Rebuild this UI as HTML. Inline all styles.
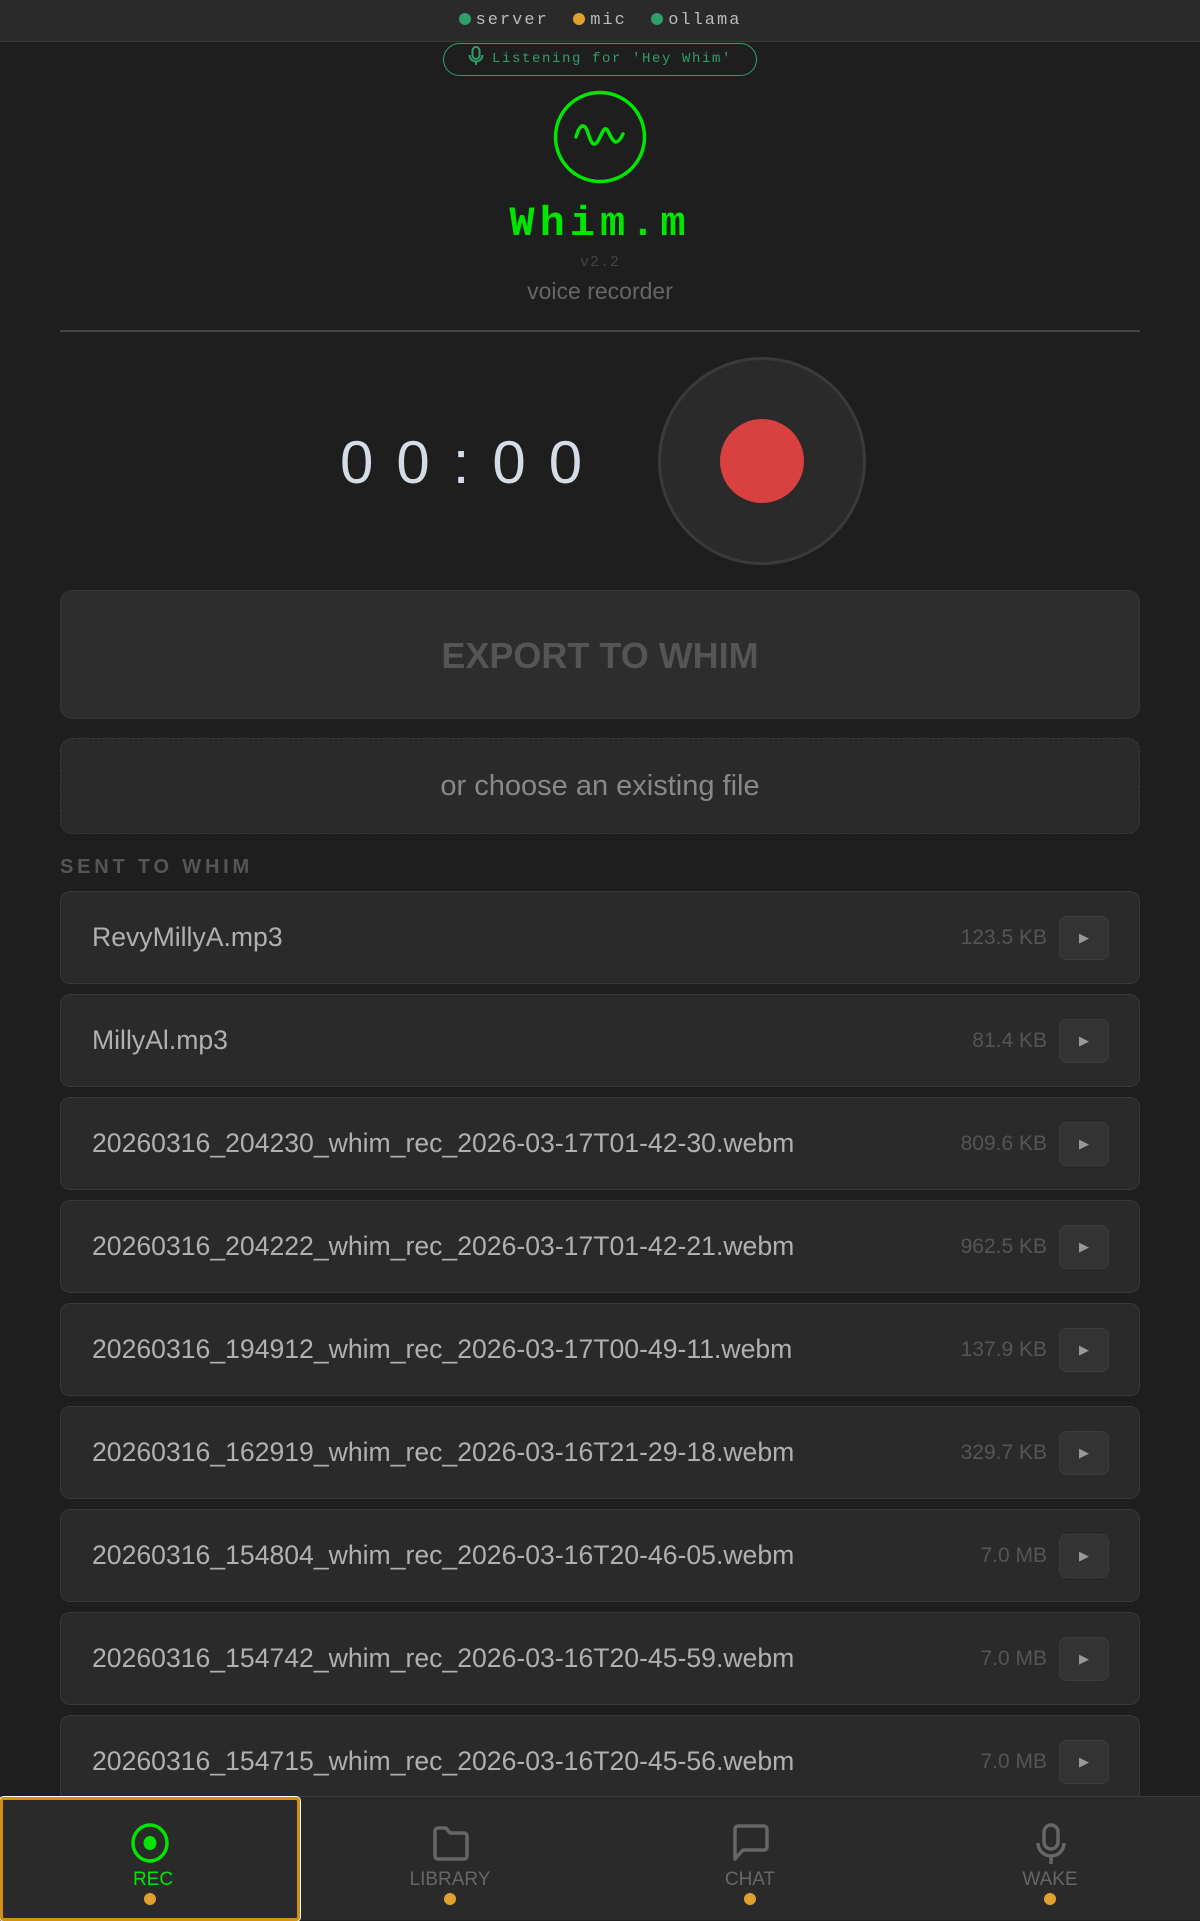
<!DOCTYPE html>
<html><head><meta charset="utf-8"><style>
*{box-sizing:border-box;margin:0;padding:0}
body{width:1200px;height:1920px;background:#1e1e1e;font-family:"Liberation Sans",sans-serif;position:relative;overflow:hidden;color:#aaa}
.top{position:absolute;left:0;top:0;width:1200px;height:42px;background:#2a2a2a;border-bottom:1px solid #3a3a3a;text-align:center;font-family:"Liberation Mono",monospace;font-size:17px;color:#bbb;line-height:42px;letter-spacing:2px}
.top .d{display:inline-block;width:12px;height:12px;border-radius:50%;vertical-align:-1px;margin-right:5px}
.pill{position:absolute;left:443px;top:43px;width:314px;height:33px;border:1.5px solid #2e9e6a;border-radius:17px;font-family:"Liberation Mono",monospace;font-size:14px;color:#2e9e6a;line-height:30px;text-align:center;letter-spacing:1.6px}
.abs{position:absolute}
.title{left:0;width:1200px;top:200px;text-align:center;font-family:"Liberation Mono",monospace;font-weight:bold;font-size:42px;color:#00e600;letter-spacing:5px}
.ver{left:0;width:1200px;top:254px;text-align:center;font-family:"Liberation Mono",monospace;font-size:15px;color:#444;letter-spacing:1px}
.sub{left:0;width:1200px;top:278px;text-align:center;font-size:23px;color:#666}
.hr{left:60px;top:330px;width:1080px;height:2px;background:#444}
.timer{left:340px;top:428px;font-size:60px;color:#d6dce6;letter-spacing:23px;font-weight:300}
.rec{left:658px;top:357px;width:208px;height:208px;border-radius:50%;background:#2a2a2a;border:3px solid #3a3a3a}
.rec i{position:absolute;left:59px;top:59px;width:84px;height:84px;border-radius:50%;background:#d94141}
.btn{left:60px;width:1080px;background:#2d2d2d;border-radius:12px;text-align:center}
.lbl{left:60px;top:856px;font-size:20px;font-weight:bold;color:#555;letter-spacing:3.8px}
.row{position:absolute;left:60px;width:1080px;height:93px;background:#2a2a2a;border:1px solid #383838;border-radius:10px}
.row .n{position:absolute;left:31px;top:0;line-height:91px;font-size:26.6px;color:#b0b0b0}
.row .s{position:absolute;right:92px;top:0;line-height:91px;font-size:21px;color:#555}
.row .p{position:absolute;right:30px;top:24px;width:50px;height:44px;background:#333;border:1px solid #3d3d3d;border-radius:8px;color:#999;font-size:13px;text-align:center;line-height:42px}
.nav{position:absolute;left:0;top:1796px;width:1200px;height:124px;background:#2a2a2a;border-top:1px solid #3a3a3a}
.tab{position:absolute;top:0;width:300px;height:124px;text-align:center}
.tab svg{position:absolute;left:131px;top:26px}
.tab .t{position:absolute;left:0;width:300px;top:72px;font-size:19px;color:#666}
.tab .dot{position:absolute;left:144px;top:96px;width:12px;height:12px;border-radius:50%;background:#e0a030}
</style></head><body>
<div class="top"><span class="d" style="background:#2e9e6a"></span>server &nbsp;<span class="d" style="background:#e0a030"></span>mic &nbsp;<span class="d" style="background:#2e9e6a"></span>ollama</div>
<div class="pill"><svg width="16" height="20" viewBox="0 0 16 20" style="vertical-align:-4px;margin-right:8px"><rect x="4.5" y="1" width="7" height="12" rx="3.5" fill="none" stroke="#2e9e6a" stroke-width="2"/><path d="M1.5 9a6.5 6.5 0 0 0 13 0M8 16v3" fill="none" stroke="#2e9e6a" stroke-width="2"/></svg>Listening for 'Hey Whim'</div>
<svg class="abs" style="left:553px;top:90px" width="94" height="94" viewBox="0 0 94 94"><circle cx="47" cy="47" r="44.5" fill="none" stroke="#00e600" stroke-width="3.5"/><path d="M23 47 C27 33 32 33 35 43 S41 59 46 49 S52 35 56 43 S63 58 70 44" fill="none" stroke="#00e600" stroke-width="3.5" stroke-linecap="round"/></svg>
<div class="abs title">Whim.m</div>
<div class="abs ver">v2.2</div>
<div class="abs sub">voice recorder</div>
<div class="abs hr"></div>
<div class="abs timer">00:00</div>
<div class="abs rec"><i></i></div>
<div class="abs btn" style="top:590px;height:129px;line-height:129px;font-size:36px;font-weight:bold;color:#555;border:1px solid #363636">EXPORT TO WHIM</div>
<div class="abs btn" style="top:738px;height:96px;line-height:94px;font-size:29px;color:#888;background:#2a2a2a;border:1px dashed #3a3a3a">or choose an existing file</div>
<div class="abs lbl">SENT TO WHIM</div>
<div class="row" style="top:891px"><span class="n">RevyMillyA.mp3</span><span class="s">123.5 KB</span><span class="p">▶</span></div>
<div class="row" style="top:994px"><span class="n">MillyAl.mp3</span><span class="s">81.4 KB</span><span class="p">▶</span></div>
<div class="row" style="top:1097px"><span class="n">20260316_204230_whim_rec_2026-03-17T01-42-30.webm</span><span class="s">809.6 KB</span><span class="p">▶</span></div>
<div class="row" style="top:1200px"><span class="n">20260316_204222_whim_rec_2026-03-17T01-42-21.webm</span><span class="s">962.5 KB</span><span class="p">▶</span></div>
<div class="row" style="top:1303px"><span class="n">20260316_194912_whim_rec_2026-03-17T00-49-11.webm</span><span class="s">137.9 KB</span><span class="p">▶</span></div>
<div class="row" style="top:1406px"><span class="n">20260316_162919_whim_rec_2026-03-16T21-29-18.webm</span><span class="s">329.7 KB</span><span class="p">▶</span></div>
<div class="row" style="top:1509px"><span class="n">20260316_154804_whim_rec_2026-03-16T20-46-05.webm</span><span class="s">7.0 MB</span><span class="p">▶</span></div>
<div class="row" style="top:1612px"><span class="n">20260316_154742_whim_rec_2026-03-16T20-45-59.webm</span><span class="s">7.0 MB</span><span class="p">▶</span></div>
<div class="row" style="top:1715px"><span class="n">20260316_154715_whim_rec_2026-03-16T20-45-56.webm</span><span class="s">7.0 MB</span><span class="p">▶</span></div>
<div class="nav">
<div class="tab" style="left:0;border:3px solid #d4900e;outline:1px solid #fff;border-radius:4px;height:124px">
<svg width="38" height="40" viewBox="0 0 38 40" style="left:128px;top:23px"><ellipse cx="19" cy="20" rx="17" ry="18" fill="none" stroke="#00e600" stroke-width="3.5"/><ellipse cx="19" cy="20" rx="6.5" ry="7" fill="#00e600"/></svg>
<div class="t" style="color:#00e600;top:69px">REC</div><div class="dot" style="top:93px;left:141px"></div></div>
<div class="tab" style="left:300px"><svg width="40" height="40" viewBox="0 0 40 40"><path d="M4 8a3 3 0 0 1 3-3h8l4 5h14a3 3 0 0 1 3 3v20a3 3 0 0 1-3 3H7a3 3 0 0 1-3-3z" fill="none" stroke="#666" stroke-width="3.5" stroke-linejoin="round"/></svg><div class="t">LIBRARY</div><div class="dot"></div></div>
<div class="tab" style="left:600px"><svg width="40" height="44" viewBox="0 0 40 44"><path d="M4 6a3 3 0 0 1 3-3h26a3 3 0 0 1 3 3v18a3 3 0 0 1-3 3H12l-8 9z" fill="none" stroke="#666" stroke-width="3.5" stroke-linejoin="round"/></svg><div class="t">CHAT</div><div class="dot"></div></div>
<div class="tab" style="left:900px"><svg width="40" height="44" viewBox="0 0 40 44"><rect x="13" y="2" width="14" height="24" rx="7" fill="none" stroke="#666" stroke-width="3.5"/><path d="M7 20a13 13 0 0 0 26 0M20 33v8" fill="none" stroke="#666" stroke-width="3.5"/></svg><div class="t">WAKE</div><div class="dot"></div></div>
</div>
</body></html>
